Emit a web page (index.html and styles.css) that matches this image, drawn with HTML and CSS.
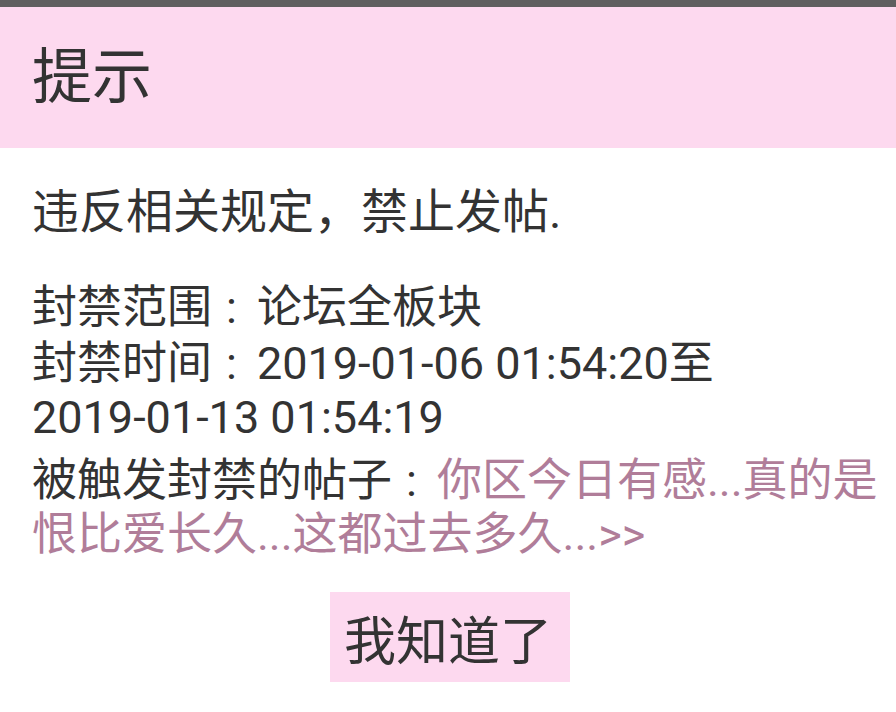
FILE: index.html
```html
<!DOCTYPE html>
<html lang="zh-CN">
<head>
<meta charset="utf-8">
<title>提示</title>
<link rel="stylesheet" href="styles.css">
</head>
<body>
<div class="dialog">
  <div class="topbar"></div>
  <div class="header"><h1 class="title">提示</h1></div>
  <div class="content">
    <p class="lead">违反相关规定，禁止发帖.</p>
    <p class="row row-scope">封禁范围<span class="colon">:</span>论坛全板块</p>
    <p class="row row-time">封禁时间<span class="colon">:</span>2019-01-06 01:54:20至<span class="nowrap">2019-01-13 01:54:19</span></p>
    <p class="row row-post">被触发封禁的帖子<span class="colon">:</span><a class="link" href="#">你区今日有感...真的是恨比爱长久...这都过去多久...&gt;&gt;</a></p>
    <div class="actions"><button class="btn" type="button">我知道了</button></div>
  </div>
</div>
</body>
</html>
```
FILE: styles.css
```css
html, body {
  margin: 0;
  padding: 0;
  background: #ffffff;
}
body {
  font-family: "Roboto", "Noto Sans CJK SC", sans-serif;
  color: #333333;
  width: 896px;
  height: 712px;
  overflow: hidden;
}
.dialog {
  display: flex;
  flex-direction: column;
}
.topbar {
  height: 7px;
  background: #5f5f5f;
}
.header {
  height: 141px;
  background: #fdd9ef;
  display: flex;
  align-items: center;
  padding-left: 32px;
}
.title {
  margin: 0;
  font-size: 60px;
  font-weight: normal;
  line-height: 1;
  color: #333333;
}
.content {
  padding: 36px 12px 0 32px;
}
.lead {
  margin: 0;
  font-size: 47px;
  line-height: 56px;
}
.row {
  margin: 0;
  font-size: 45px;
  line-height: 54px;
}
.row-scope { margin-top: 41px; }
.row-time { margin-top: 2px; }
.row-post { margin-top: 9px; }
.colon {
  margin-left: 14px;
  margin-right: 20px;
}
.nowrap {
  white-space: nowrap;
}
.link {
  color: #b07d99;
  text-decoration: none;
}
.actions {
  display: flex;
  justify-content: center;
  margin-top: 30px;
  padding-right: 16px;
}
.btn {
  width: 240px;
  height: 90px;
  border: none;
  background: #fdd9ef;
  font-family: "Roboto", "Noto Sans CJK SC", sans-serif;
  font-size: 52px;
  color: #333333;
  padding: 0 4px 0 0;
}
```
